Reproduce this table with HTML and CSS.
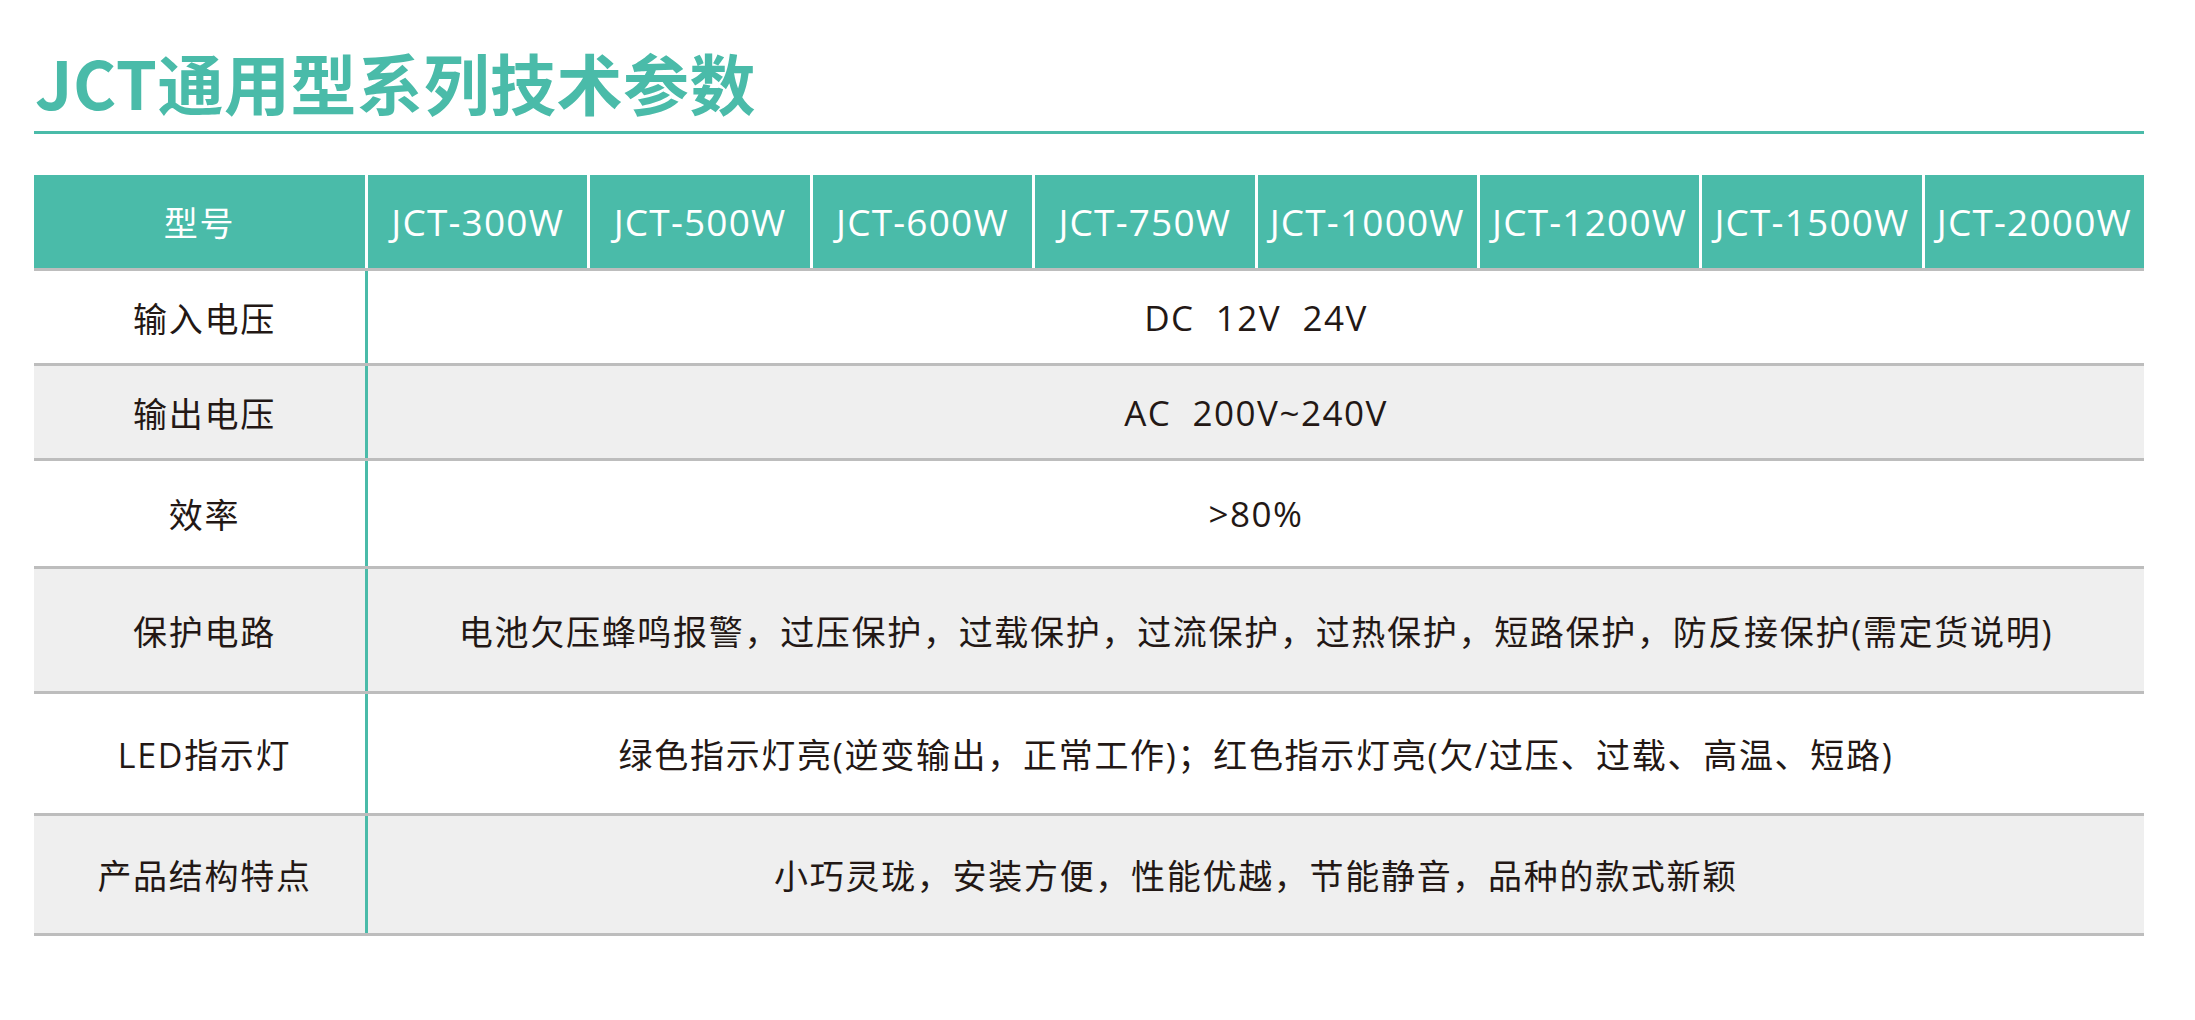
FILE: index.html
```html
<!DOCTYPE html>
<html lang="zh-CN">
<head>
<meta charset="utf-8">
<title>JCT通用型系列技术参数</title>
<link rel="stylesheet" href="styles.css">
</head>
<body>
<div class="page">
  <h1 class="title">JCT通用型系列技术参数</h1>
  <div class="spec">
    <div class="row head">
      <div class="cell label">型号</div>
      <div class="cell model">JCT-300W</div>
      <div class="cell model">JCT-500W</div>
      <div class="cell model">JCT-600W</div>
      <div class="cell model">JCT-750W</div>
      <div class="cell model">JCT-1000W</div>
      <div class="cell model">JCT-1200W</div>
      <div class="cell model">JCT-1500W</div>
      <div class="cell model">JCT-2000W</div>
    </div>
    <div class="row body r1">
      <div class="cell label">输入电压</div>
      <div class="cell value latin">DC&nbsp; 12V&nbsp; 24V</div>
    </div>
    <div class="row body alt r2">
      <div class="cell label">输出电压</div>
      <div class="cell value latin">AC&nbsp; 200V~240V</div>
    </div>
    <div class="row body r3">
      <div class="cell label">效率</div>
      <div class="cell value latin">&gt;80%</div>
    </div>
    <div class="row body alt r4">
      <div class="cell label">保护电路</div>
      <div class="cell value">电池欠压蜂鸣报警，过压保护，过载保护，过流保护，过热保护，短路保护，防反接保护(需定货说明)</div>
    </div>
    <div class="row body r5">
      <div class="cell label">LED指示灯</div>
      <div class="cell value">绿色指示灯亮(逆变输出，正常工作)；红色指示灯亮(欠/过压、过载、高温、短路)</div>
    </div>
    <div class="row body alt r6">
      <div class="cell label">产品结构特点</div>
      <div class="cell value">小巧灵珑，安装方便，性能优越，节能静音，品种的款式新颖</div>
    </div>
  </div>
</div>
</body>
</html>
```

FILE: styles.css
```css
html, body {
  margin: 0;
  padding: 0;
  background: #ffffff;
}

.page {
  width: 2110px;
  padding-left: 34px;
  font-family: "Open Sans", "Noto Sans CJK SC", sans-serif;
  color: #231815;
}

.title {
  margin: 0;
  padding: 36px 0 5px 1px;
  height: 90px;
  line-height: 90px;
  font-family: "Noto Sans CJK SC", sans-serif;
  font-weight: 700;
  font-size: 66px;
  letter-spacing: 0.5px;
  color: #4abba9;
  border-bottom: 3px solid #4abba9;
}

.spec {
  margin-top: 41px;
}

.row {
  display: grid;
  border-bottom: 3px solid #bdbdbd;
}

.row.head {
  grid-template-columns: 331px repeat(8, 1fr);
  height: 93px;
  background: #4abba9;
  color: #ffffff;
}

.row.body {
  grid-template-columns: 331px 1fr;
  background: #ffffff;
}

.row.alt {
  background: #efefef;
}

.r1 { height: 92px; }
.r2 { height: 92px; }
.r3 { height: 105px; }
.r4 { height: 122px; }
.r5 { height: 119px; }
.r6 { height: 117px; }

.cell {
  display: flex;
  align-items: center;
  justify-content: center;
  white-space: nowrap;
  font-size: 34px;
  letter-spacing: 1.7px;
}

.body .label {
  padding-left: 10px;
}

.head .label {
  font-size: 34px;
}

.model {
  border-left: 3px solid #ffffff;
  font-size: 37px;
  letter-spacing: 1.2px;
}

.value {
  border-left: 3px solid #4abba9;
}

.latin {
  font-size: 35px;
  letter-spacing: 1.5px;
}
```
